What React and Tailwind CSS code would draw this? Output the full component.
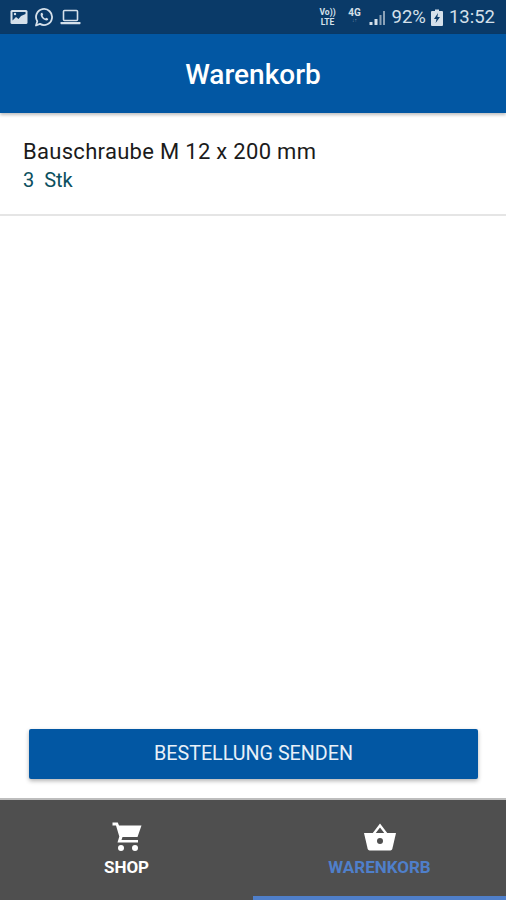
import React from "react";

const roboto = { fontFamily: "Roboto, sans-serif" };

function StatusLeft() {
  return (
    <div className="flex items-center gap-[6px] text-[#d5e0ea]">
      <svg width="18" height="16" viewBox="0 0 18 16">
        <rect x="0.5" y="1" width="17" height="14" rx="1.5" fill="#d5e0ea" />
        <path d="M2.5 11.5 L6 8 L8.5 10 L11 7 L15.5 5 V3 H2.5 Z" fill="#0a3a68" />
        <circle cx="5" cy="5" r="1.2" fill="#d5e0ea" />
      </svg>
      <svg width="20" height="20" viewBox="0 0 20 20" fill="none">
        <path d="M2 18.5 L3.3 14.3 A8 8 0 1 1 6 16.9 Z" stroke="#d5e0ea" strokeWidth="1.8" strokeLinejoin="round" />
        <path d="M7 6 C6 7.5 7 10 8.5 11.5 C10 13 12.5 14 14 13 L14.2 11.7 L12.3 10.8 L11.4 11.6 C10.2 11.1 9 9.8 8.5 8.7 L9.2 7.8 L8.3 5.8 Z" fill="#d5e0ea" />
      </svg>
      <svg width="21" height="16" viewBox="0 0 21 16" fill="none">
        <rect x="3.5" y="1.5" width="14" height="10" rx="1" stroke="#d5e0ea" strokeWidth="1.6" />
        <rect x="0.5" y="13" width="20" height="2.2" rx="0.6" fill="#d5e0ea" />
      </svg>
    </div>
  );
}

function StatusRight() {
  return (
    <div className="flex items-center text-[#d5e0ea]">
      <div className="flex w-[18px] flex-col items-center text-[8.5px] font-bold leading-[10px]">
        <span>Vo))</span>
        <span>LTE</span>
      </div>
      <div className="ml-[11px] flex w-[14px] flex-col items-center self-start pt-[1px] text-[10px] font-bold leading-[10px]">
        <span>4G</span>
        <span className="text-[5px] leading-[5px] text-[#7f98b1]">↓↑</span>
      </div>
      <svg className="ml-[6px]" width="18" height="17" viewBox="0 0 17 17">
        <path d="M1 13 H4 V16 H1 Z" fill="#d5e0ea" />
        <path d="M6 10 H9 V16 H6 Z" fill="#d5e0ea" />
        <path d="M11 6 H13 V16 H11 Z" fill="#8ba2b8" />
        <path d="M14.5 2 H16.5 V16 H14.5 Z" fill="#8ba2b8" />
      </svg>
      <span className="ml-[6px] text-[18.5px] leading-none">92%</span>
      <svg className="ml-[5px]" width="12" height="17" viewBox="0 0 12 17">
        <path d="M4 0.5 H8 V2 H11 A1 1 0 0 1 12 3 V16 A1 1 0 0 1 11 17 H1 A1 1 0 0 1 0 16 V3 A1 1 0 0 1 1 2 H4 Z" fill="#d5e0ea" />
        <path d="M7 4 L3 10 H5.5 L4.6 14 L9 8 H6.4 Z" fill="#0a3a68" />
      </svg>
      <span className="ml-[6px] text-[18.5px] leading-none">13:52</span>
    </div>
  );
}

function CartIcon() {
  return (
    <svg width="30" height="30" viewBox="0 0 30 30" fill="#fff">
      <path d="M0.5 0.5 H5.8 L7 3.5 H29.5 L25.5 15 H10.5 L9.5 18 H26 V20.5 H5.5 L7.3 14.5 L4 3.5 H0.5 Z" />
      <circle cx="9" cy="26" r="3" />
      <circle cx="23" cy="26" r="3" />
    </svg>
  );
}

function BasketIcon() {
  return (
    <svg width="34" height="30" viewBox="0 0 34 30" fill="#fff">
      <path d="M17 1.5 L25 12 H22 L17 5.5 L12 12 H9 Z" />
      <path d="M1 11 H33 L29.3 27 A2 2 0 0 1 27.4 28.5 H6.6 A2 2 0 0 1 4.7 27 Z" />
      <circle cx="17" cy="19" r="3" fill="#4f4f4f" />
    </svg>
  );
}

export default function App() {
  return (
    <div className="flex h-[900px] w-[506px] flex-col overflow-hidden bg-white" style={roboto}>
      <div className="flex h-[34px] shrink-0 items-center justify-between bg-[#0a3a68] pl-[10px] pr-[11px]">
        <StatusLeft />
        <StatusRight />
      </div>
      <header className="z-10 flex h-[79px] shrink-0 items-center justify-center bg-[#0257a3] pt-[3px] shadow-[0_2px_3px_rgba(0,0,0,0.25)]">
        <h1 className="text-[28px] font-medium leading-none text-white">Warenkorb</h1>
      </header>
      <div className="flex h-[103px] shrink-0 flex-col border-b-2 border-[#e5e5e5] pl-[23px] pt-[26px]">
        <span className="text-[22px] leading-[26px] tracking-[0.3px] text-[#1b1b1b]">Bauschraube M 12 x 200 mm</span>
        <span className="mt-[4px] whitespace-pre text-[20px] leading-[22px] text-[#0c5060]">3  Stk</span>
      </div>
      <div className="flex flex-1 flex-col justify-end pb-[19px] pl-[29px] pr-[28px]">
        <button className="flex h-[50px] items-center justify-center rounded-[2px] bg-[#0257a3] text-[19.7px] font-normal text-[#e8f0f8] shadow-[0_2px_4px_rgba(0,0,0,0.3)]">
          BESTELLUNG SENDEN
        </button>
      </div>
      <nav className="grid h-[102px] shrink-0 grid-cols-2 border-t-2 border-[#bdbdbd] bg-[#4f4f4f]">
        <div className="flex flex-col items-center pt-[22px]">
          <CartIcon />
          <span className="mt-[5px] text-[17px] font-bold leading-[20px] text-white">SHOP</span>
        </div>
        <div className="flex flex-col items-center border-b-[4px] border-[#4f7fca] pt-[22px]">
          <BasketIcon />
          <span className="mt-[5px] text-[17px] font-bold leading-[20px] text-[#4f7fca]">WARENKORB</span>
        </div>
      </nav>
    </div>
  );
}
